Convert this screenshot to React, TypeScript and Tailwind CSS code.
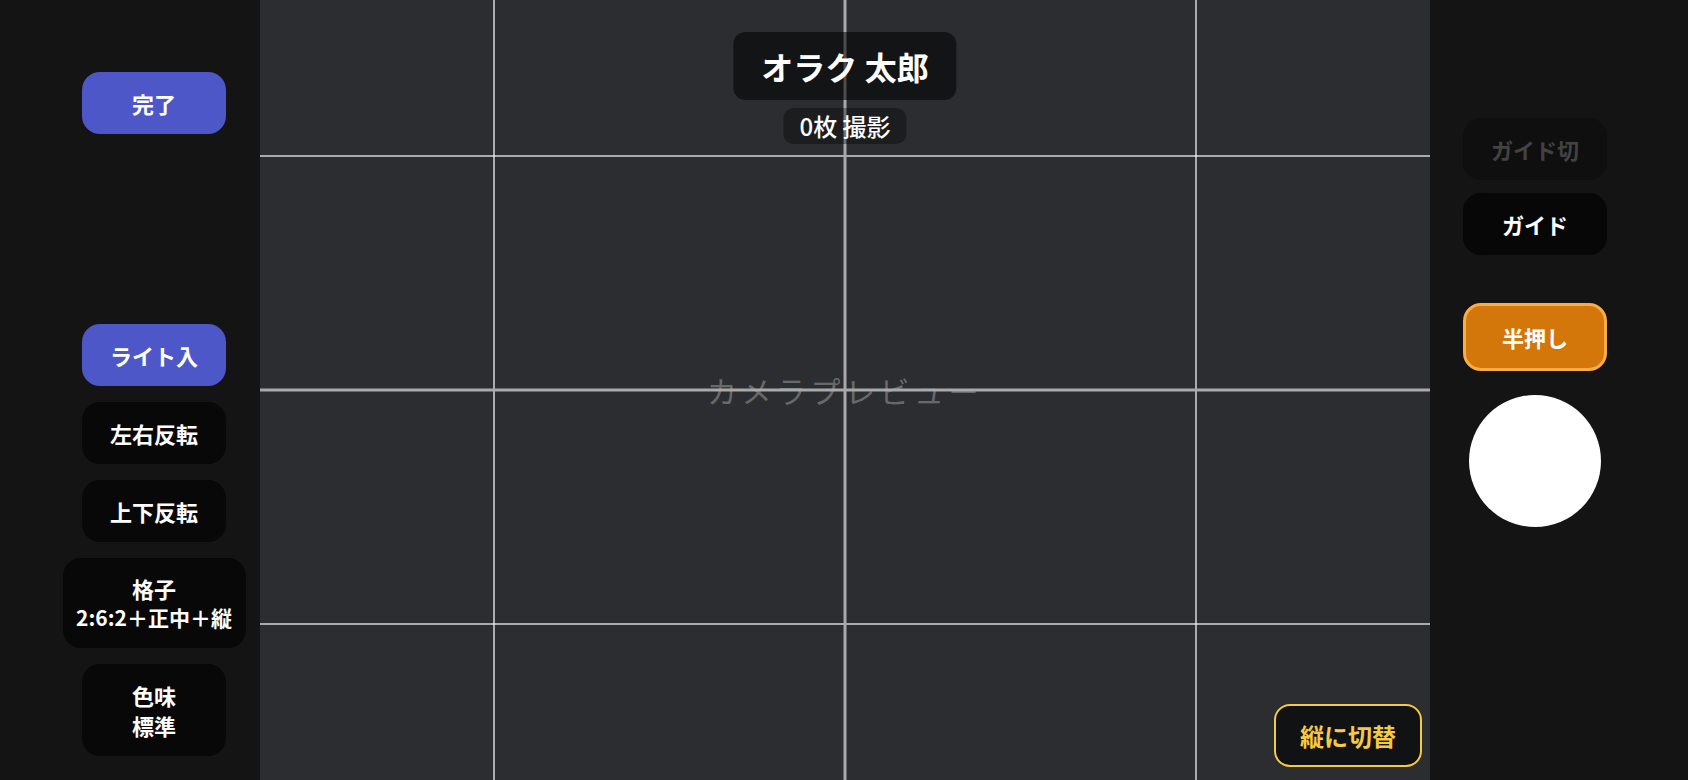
import React from "react";

const font = { fontFamily: '"Noto Sans CJK JP", "Noto Sans", sans-serif' };

function SideButton({
  children,
  className = "",
}: {
  children: React.ReactNode;
  className?: string;
}) {
  return (
    <button
      className={`flex flex-col items-center justify-center rounded-[18px] py-4 text-[22px] font-bold leading-[30px] text-white ${className}`}
    >
      {children}
    </button>
  );
}

function GridLines() {
  return (
    <>
      {/* thin 2:6:2 lines */}
      <div className="absolute top-0 bottom-0 left-[20%] w-[2px] -translate-x-1/2 bg-white/60" />
      <div className="absolute top-0 bottom-0 left-[80%] w-[2px] -translate-x-1/2 bg-white/60" />
      <div className="absolute left-0 right-0 top-[20%] h-[2px] -translate-y-1/2 bg-white/60" />
      <div className="absolute left-0 right-0 top-[80%] h-[2px] -translate-y-1/2 bg-white/60" />
      {/* center cross */}
      <div className="absolute top-0 bottom-0 left-1/2 w-[3px] -translate-x-1/2 bg-[#a9a9a9]" />
      <div className="absolute left-0 right-0 top-1/2 h-[3px] -translate-y-1/2 bg-[#a9a9a9]" />
    </>
  );
}

export default function App() {
  return (
    <div className="flex h-[780px] w-[1688px] overflow-hidden bg-[#141414]" style={font}>
      {/* Left controls */}
      <aside className="flex w-[260px] shrink-0 flex-col items-center justify-between bg-[#141414] pb-6 pl-12 pt-[72px]">
        <SideButton className="w-[144px] bg-[#4d57c8]">完了</SideButton>
        <div className="flex flex-col items-center gap-4">
          <SideButton className="w-[144px] bg-[#4d57c8]">ライト入</SideButton>
          <SideButton className="w-[144px] bg-[#080808]">左右反転</SideButton>
          <SideButton className="w-[144px] bg-[#080808]">上下反転</SideButton>
          <SideButton className="w-[183px] bg-[#080808] !leading-[29px]">
            <span>格子</span>
            <span className="whitespace-nowrap text-[21px]">2:6:2＋正中＋縦</span>
          </SideButton>
          <SideButton className="w-[144px] bg-[#080808]">
            <span>色味</span>
            <span>標準</span>
          </SideButton>
        </div>
      </aside>

      {/* Camera preview */}
      <main className="relative flex flex-1 items-center justify-center bg-[#2c2d31]">
        <span className="text-[30px] leading-none tracking-[0.15em] text-white/30">
          カメラプレビュー
        </span>

        <GridLines />

        <div className="absolute left-1/2 top-8 flex -translate-x-1/2 flex-col items-center gap-2">
          <div className="rounded-[12px] bg-black/55 px-7 py-[10px] text-[32px] font-bold leading-[48px] text-white">
            オラク 太郎
          </div>
          <div className="rounded-[10px] bg-black/35 px-4 py-1 text-[24px] font-medium leading-[28px] text-white">
            0枚 撮影
          </div>
        </div>

        <button className="absolute bottom-[13px] right-2 flex h-[63px] w-[148px] items-center justify-center rounded-[16px] border-2 border-[#f6c944] bg-[#111214] text-[24px] font-bold text-[#f6c944]">
          縦に切替
        </button>
      </main>

      {/* Right controls */}
      <aside className="flex w-[258px] shrink-0 flex-col items-center bg-[#141414] pr-12 pt-[118px]">
        <SideButton className="w-[144px] bg-[#0f0f0f] !text-[#424242]">ガイド切</SideButton>
        <SideButton className="mt-[13px] w-[144px] bg-[#070707]">ガイド</SideButton>
        <button className="mt-12 flex h-[68px] w-[144px] items-center justify-center rounded-[18px] border-[3px] border-[#f9ad48] bg-[#d4770b] text-[22px] font-bold text-white">
          半押し
        </button>
        <div className="mt-6 h-[132px] w-[132px] rounded-full bg-white" />
      </aside>
    </div>
  );
}
